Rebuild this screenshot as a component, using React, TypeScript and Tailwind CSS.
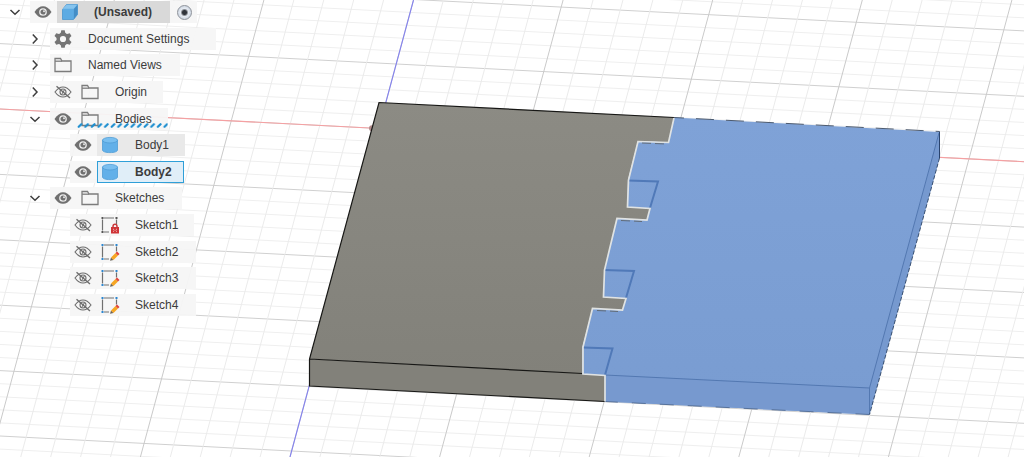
import React from "react";

const range = (from: number, to: number) =>
  Array.from({ length: to - from + 1 }, (_, i) => from + i);

/* ---------- viewport ---------- */

const CROSS_STEP = 13.08;
const DEPTH_STEP = 29.92;

function Viewport() {
  return (
    <svg
      className="absolute inset-0 h-full w-full"
      viewBox="0 0 1024 457"
      preserveAspectRatio="xMinYMin slice"
      aria-hidden="true"
    >
      <defs>
        <linearGradient id="greyTop" x1="0" y1="0" x2="0" y2="1">
          <stop offset="0" stopColor="#8c8b84" />
          <stop offset="1" stopColor="#82817a" />
        </linearGradient>
        <linearGradient id="blueTop" x1="0" y1="0" x2="0" y2="1">
          <stop offset="0" stopColor="#7fa2d7" />
          <stop offset="1" stopColor="#799cd1" />
        </linearGradient>
      </defs>

      {range(-12, 30).map((k) => (
        <line
          key={`c${k}`}
          x1={0}
          y1={109 + k * CROSS_STEP}
          x2={1024}
          y2={161.7 + k * CROSS_STEP}
          stroke={k % 5 === 0 ? "#d0d0d0" : "#efefef"}
        />
      ))}
      {range(-14, 26).map((k) => (
        <line
          key={`d${k}`}
          x1={413.5 + k * DEPTH_STEP}
          y1={0}
          x2={290 + k * DEPTH_STEP}
          y2={457}
          stroke={k % 5 === 0 ? "#cacaca" : "#ebebeb"}
        />
      ))}
      <line x1="0" y1="109" x2="1024" y2="161.7" stroke="#f5a0a2" strokeWidth="1.1" />
      <line x1="413.5" y1="0" x2="290" y2="457" stroke="#8583ee" strokeWidth="1.1" />
      <circle cx="372" cy="128.3" r="3" fill="#b08b8b" />

      {/* grey body */}
      <path
        d="M379 102.5 674 117.5 668.5 142.5 638 141 628 180 627.5 207 650 208.5 647 220 617 218.5 604.5 270 603.5 297 626 298.5 622.5 310 592.5 308.5 582.5 347V374L309.5 359Z"
        fill="url(#greyTop)"
      />
      <path d="M309.5 359 582.5 373.5 605 375.5V401.5L309.5 386Z" fill="#82817a" />
      <path
        d="M674 117.5 379 102.5 309.5 359V386L605 401.5M309.5 359 582.5 373.5"
        fill="none"
        stroke="#171715"
        strokeWidth="1.2"
      />

      {/* blue body */}
      <path
        d="M674 117.5 939.5 132V158L869.5 414.5 605 401.5V375.5L582.5 374V347L592.5 308.5 622.5 310 626 298.5 603.5 297 604.5 270 617 218.5 647 220 650 208.5 627.5 207 628 180 638 141 668.5 142.5Z"
        fill="url(#blueTop)"
      />
      <path d="M605 375 869.5 388V414.5L605 401.5Z" fill="#7799cf" />
      <path d="M939.5 132V158L869.5 414.5V388Z" fill="#7699cf" />
      <g fill="none" stroke="#5378b1">
        <path d="M605 375 869.5 388V414M869.5 388 939 133" />
        <path
          d="M628 180.5 658 181.5 650 208M604 270 634 271 626 298M583 347.5 612.5 348.5 605 375"
          strokeWidth="2"
          stroke="#5079b8"
        />
      </g>
      <path
        d="M674 117.5 939.5 131.5"
        stroke="#4b5a70"
        strokeDasharray="18 12"
        strokeDashoffset="8"
      />
      <path d="M939.5 131.5V158" stroke="#29436d" />
      <path d="M939.5 158 869.5 414.5" stroke="#3b5274" strokeDasharray="4 2" />
      <path d="M869.5 414.5 605 401.5" stroke="#57729b" strokeDasharray="14 14" />

      {/* shared boundary */}
      <path
        d="M674 118 668.5 142.5 638 141.5 628.5 180 627.5 207 650 208.5 647 220 617 218.5 604.5 270 603.5 297 626 298.5 622.5 310 592.5 308.5 583 347V374L605 375.5V401.5"
        fill="none"
        stroke="#e0e3e3"
        strokeWidth="1.7"
      />
      <path
        d="M642 143 666 144M621 220.5 642 221.5M597 310.5 618 311.5"
        stroke="#5b5e60"
        strokeWidth="0.8"
        strokeDasharray="9 4"
      />
    </svg>
  );
}

/* ---------- icons ---------- */

const Chevron = ({ open }: { open: boolean }) => (
  <svg width="12" height="12" viewBox="0 0 12 12" fill="none" stroke="#3f3f3f" strokeWidth="1.5">
    <path d={open ? "M1.5 4 6 8.3 10.5 4" : "M3.8 1.5 8 6 3.8 10.5"} />
  </svg>
);

const Eye = () => (
  <svg width="18" height="14" viewBox="0 0 18 14">
    <path d="M.5 7C3 3 5.8 1.2 9 1.2S15 3 17.5 7C15 11 12.2 12.8 9 12.8S3 11 .5 7Z" fill="#707070" />
    <circle cx="9" cy="7" r="3.2" fill="#707070" stroke="#ececec" strokeWidth="1.3" />
    <circle cx="10" cy="6.2" r="1" fill="#e4e4e4" />
  </svg>
);

const EyeOff = () => (
  <svg width="18" height="14" viewBox="0 0 18 14" fill="none" stroke="#6d6d6d" strokeWidth="1.1">
    <path d="M1 7C3.5 3.6 6 2 9 2s5.5 1.6 8 5c-2.5 3.4-5 5-8 5S3.5 10.4 1 7Z" />
    <circle cx="9" cy="7" r="3" />
    <path d="M10.5 4.8 8 8.8" />
    <path d="M2.5 1.2 16 13" strokeWidth="1.4" />
  </svg>
);

const Folder = () => (
  <svg width="18" height="16" viewBox="0 0 18 16" fill="none" stroke="#7c7c7c" strokeWidth="1.3">
    <path d="M1 14.5V1.5H6.5L8 4H17V14.5Z" />
    <path d="M1 4.2H8" />
  </svg>
);

const Gear = () => (
  <svg width="18" height="18" viewBox="0 0 18 18">
    <g fill="#747474">
      {range(0, 5).map((i) => (
        <path key={i} d="M6.5 4 7.3.2h3.4L11.5 4Z" transform={`rotate(${i * 60} 9 9)`} />
      ))}
    </g>
    <circle cx="9" cy="9" r="4.8" fill="none" stroke="#747474" strokeWidth="3.4" />
  </svg>
);

const Cube = () => (
  <svg width="18" height="18" viewBox="0 0 18 18">
    <path d="M1.5 6.5 5.5 1.5H16.5V11.5L12.5 16.5H1.5Z" fill="#5dabe3" stroke="#4a96cf" strokeWidth=".8" strokeLinejoin="round" />
    <path d="M1.8 5.8 5.7 1.7H16.3L12.8 5.8Z" fill="#86c4ee" />
    <path d="M12.9 6 16.3 2V11.5L12.9 16Z" fill="#448dc6" />
  </svg>
);

const Cylinder = () => (
  <svg width="18" height="18" viewBox="0 0 18 18">
    <path d="M1.5 4V14C1.5 15.5 4.5 16.6 9 16.6S16.5 15.5 16.5 14V4Z" fill="#62b0e9" stroke="#4f9dd6" strokeWidth=".8" />
    <ellipse cx="9" cy="4.2" rx="7.5" ry="2.8" fill="#79bff0" stroke="#4f9dd6" strokeWidth=".8" />
  </svg>
);

const SketchIcon = ({ locked }: { locked?: boolean }) => {
  const dot = locked ? "#555555" : "#2c86cf";
  return (
    <svg width="20" height="18" viewBox="0 0 20 18">
      <path d="M4 2H14M2.5 3.5V14.5M16.5 3.5V8.5M4 16H9" stroke="#707070" strokeWidth="1.2" fill="none" />
      <g fill={dot}>
        <rect x="1.5" y="1" width="2" height="2" />
        <rect x="15.5" y="1" width="2" height="2" />
        <rect x="1.5" y="15" width="2" height="2" />
      </g>
      {locked ? (
        <g>
          <path d="M13 11V10.5C13 7.6 17 7.6 17 10.5V11" fill="none" stroke="#c83a3c" strokeWidth="1.5" />
          <rect x="11" y="11" width="8" height="6.5" fill="#cf3437" />
          <path d="M13 13.3h1M16 13.3h1M13 15.3h1M16 15.3h1M14.5 14.3h1" stroke="#efb3b3" />
        </g>
      ) : (
        <g>
          <path d="M10 17.8 11 14.5 13.5 17Z" fill="#6a6258" />
          <path d="M11 14.5 15.5 10 18 12.5 13.5 17Z" fill="#f6a623" />
          <path d="M15.5 10 17 8.5 19.5 11 18 12.5Z" fill="#e0413a" />
        </g>
      )}
    </svg>
  );
};

/* ---------- browser tree ---------- */

const iconBox = "flex w-[25px] shrink-0 items-center justify-center";

function Row({
  indent,
  open,
  visible,
  icon,
  label,
  tail,
  tone = "",
  drop,
}: {
  indent: string;
  open?: boolean;
  visible?: boolean;
  icon: React.ReactNode;
  label: string;
  tail: string;
  tone?: string;
  drop?: boolean;
}) {
  return (
    <li className={`flex items-center ${indent}`}>
      {open === undefined ? null : (
        <button
          type="button"
          aria-label={`${open ? "Collapse" : "Expand"} ${label}`}
          className="flex w-[30px] justify-center"
        >
          <Chevron open={open} />
        </button>
      )}
      <div className="flex h-[22px] gap-0.5 bg-[#f5f5f5]/95">
        {visible === undefined ? null : (
          <button type="button" aria-label={`Visibility of ${label}`} aria-pressed={visible} className={iconBox}>
            {visible ? <Eye /> : <EyeOff />}
          </button>
        )}
        <button type="button" className={`relative flex items-center ${tone} ${tail}`}>
          <span className={iconBox}>{icon}</span>
          <span className="pl-[13px] whitespace-nowrap">{label}</span>
          {drop ? (
            <svg className="absolute bottom-0.5 left-0 h-[5px] w-full" aria-hidden="true">
              <defs>
                <pattern id="dropMark" width="6.6" height="5" patternUnits="userSpaceOnUse">
                  <path d="M1.7 3.8 4.3 1.2" stroke="#1e8fd0" strokeWidth="2.2" strokeLinecap="round" />
                </pattern>
              </defs>
              <rect width="100%" height="5" fill="url(#dropMark)" />
            </svg>
          ) : null}
        </button>
      </div>
    </li>
  );
}

export default function App() {
  return (
    <main className="relative min-h-screen overflow-hidden bg-white font-['Liberation_Sans',Arial,sans-serif] text-xs text-[#3c3c3c]">
      <Viewport />
      <nav aria-label="Browser" className="relative">
        <ul className="-mt-px grid h-[319px] auto-rows-fr">
          <li className="flex items-center">
            <button type="button" aria-label="Collapse document" className="flex w-[30px] justify-center">
              <Chevron open />
            </button>
            <div className="flex h-[22px] gap-0.5 bg-[#f5f5f5]/95">
              <button type="button" aria-label="Visibility of document" className={iconBox}>
                <Eye />
              </button>
              <button type="button" className="flex items-center bg-[#d9d9d9] pr-[18px] font-bold">
                <span className={iconBox}>
                  <Cube />
                </span>
                <span className="pl-3">(Unsaved)</span>
              </button>
              <span className={iconBox}>
                <input
                  type="radio"
                  name="active"
                  aria-label="Activate document"
                  defaultChecked
                  className="size-[15px] appearance-none rounded-full border border-[#8e939b] bg-[radial-gradient(circle,#30343b_0_2px,#e6ebf2_4px,#b9c4d4_100%)]"
                />
              </span>
            </div>
          </li>
          <Row indent="pl-5" open={false} icon={<Gear />} label="Document Settings" tail="pr-[27px]" />
          <Row indent="pl-5" open={false} icon={<Folder />} label="Named Views" tail="pr-[18px]" />
          <Row indent="pl-5" open={false} visible={false} icon={<Folder />} label="Origin" tail="pr-4" />
          <Row indent="pl-5" open visible icon={<Folder />} label="Bodies" tail="pr-4" drop />
          <Row indent="pl-[70px]" visible icon={<Cylinder />} label="Body1" tail="pr-4" tone="bg-[#e9e9e9]" />
          <Row
            indent="pl-[70px]"
            visible
            icon={<Cylinder />}
            label="Body2"
            tail="pr-3"
            tone="bg-[#e0eef8] font-bold outline -outline-offset-1 outline-[#2f9fd8]"
          />
          <Row indent="pl-5" open visible icon={<Folder />} label="Sketches" tail="pr-[18px]" />
          <Row indent="pl-[70px]" visible={false} icon={<SketchIcon locked />} label="Sketch1" tail="pr-4" />
          <Row indent="pl-[70px]" visible={false} icon={<SketchIcon />} label="Sketch2" tail="pr-[18px]" />
          <Row indent="pl-[70px]" visible={false} icon={<SketchIcon />} label="Sketch3" tail="pr-[18px]" />
          <Row indent="pl-[70px]" visible={false} icon={<SketchIcon />} label="Sketch4" tail="pr-[18px]" />
        </ul>
      </nav>
    </main>
  );
}
